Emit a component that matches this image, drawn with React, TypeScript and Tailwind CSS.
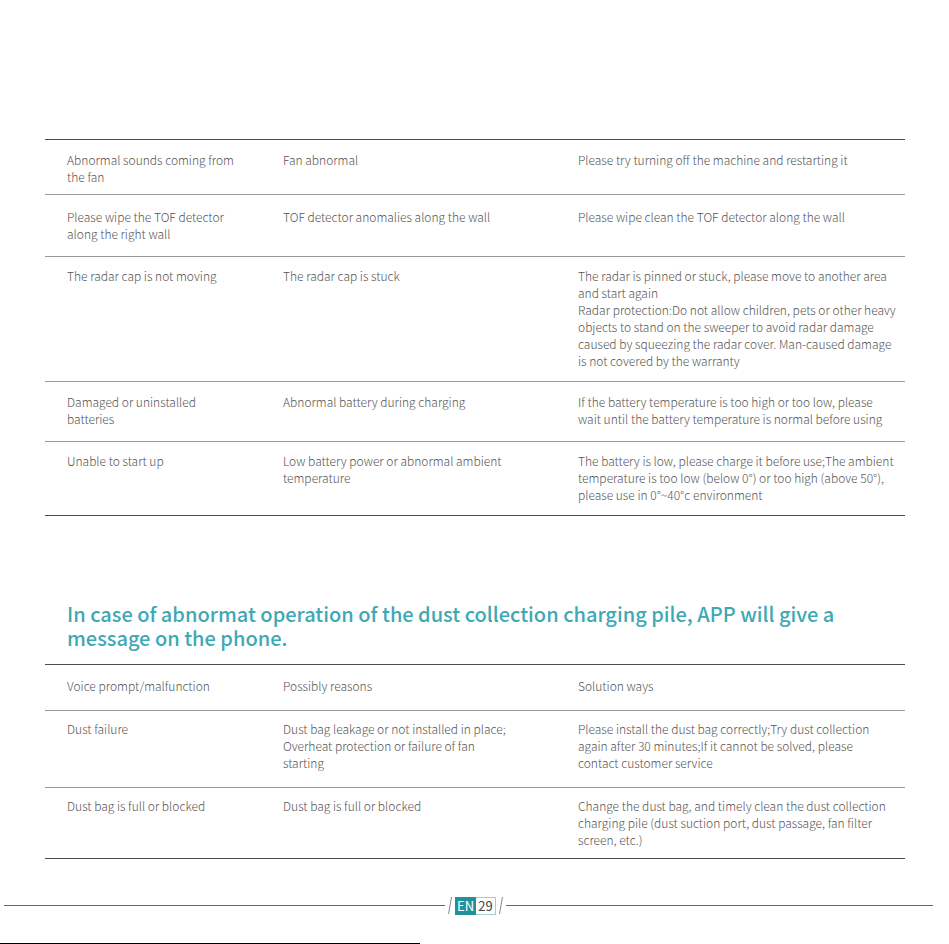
import React from "react";

const font = { fontFamily: '"Noto Sans CJK SC", "Noto Sans", sans-serif' };

type Row = { h: string; pt: string; c1: string[]; c2: string[]; c3: string[] };

const rows1: Row[] = [
  { h: "h-[55px]", pt: "pt-[11px]", c1: ["Abnormal sounds coming from", "the fan"], c2: ["Fan abnormal"], c3: ["Please try turning off the machine and restarting it"] },
  { h: "h-[62px]", pt: "pt-[13px]", c1: ["Please wipe the TOF detector", "along the right wall"], c2: ["TOF detector anomalies along the wall"], c3: ["Please wipe clean the TOF detector along the wall"] },
  {
    h: "h-[125px]", pt: "pt-[10px]", c1: ["The radar cap is not moving"], c2: ["The radar cap is stuck"],
    c3: [
      "The radar is pinned or stuck, please move to another area",
      "and start again",
      "Radar protection:Do not allow children, pets or other heavy",
      "objects to stand on the sweeper to avoid radar damage",
      "caused by squeezing the radar cover. Man-caused damage",
      "is not covered by the warranty",
    ],
  },
  { h: "h-[60px]", pt: "pt-[11px]", c1: ["Damaged or uninstalled", "batteries"], c2: ["Abnormal battery during charging"], c3: ["If the battery temperature is too high or too low, please", "wait until the battery temperature is normal before using"] },
  { h: "h-[74px]", pt: "pt-[10px]", c1: ["Unable to start up"], c2: ["Low battery power or abnormal ambient", "temperature"], c3: ["The battery is low, please charge it before use;The ambient", "temperature is too low (below 0°) or too high (above 50°),", "please use in 0°~40°c environment"] },
];

const rows2: Row[] = [
  { h: "h-[46px]", pt: "pt-[12px]", c1: ["Voice prompt/malfunction"], c2: ["Possibly reasons"], c3: ["Solution ways"] },
  { h: "h-[77px]", pt: "pt-[9px]", c1: ["Dust failure"], c2: ["Dust bag leakage or not installed in place;", "Overheat protection or failure of fan", "starting"], c3: ["Please install the dust bag correctly;Try dust collection", "again after 30 minutes;If it cannot be solved, please", "contact customer service"] },
  { h: "h-[71px]", pt: "pt-[9px]", c1: ["Dust bag is full or blocked"], c2: ["Dust bag is full or blocked"], c3: ["Change the dust bag, and timely clean the dust collection", "charging pile (dust suction port, dust passage, fan filter", "screen, etc.)"] },
];

function Lines({ lines }: { lines: string[] }) {
  return (
    <div>
      {lines.map((l, i) => (
        <div key={i} className="whitespace-nowrap">{l}</div>
      ))}
    </div>
  );
}

function Table({ rows }: { rows: Row[] }) {
  return (
    <div className="mx-[45px] w-[860px] border-t border-[#4d4d4d]">
      {rows.map((r, i) => (
        <div
          key={i}
          className={`grid grid-cols-[238px_295px_1fr] ${r.h} ${r.pt} border-b ${i === rows.length - 1 ? "border-[#4d4d4d]" : "border-[#9a9a9a]"} text-[12px] leading-[17px] font-light text-[#555555]`}
        >
          <div className="pl-[22px]"><Lines lines={r.c1} /></div>
          <div><Lines lines={r.c2} /></div>
          <div><Lines lines={r.c3} /></div>
        </div>
      ))}
    </div>
  );
}

export default function App() {
  return (
    <div className="w-[949px] h-[944px] bg-white flex flex-col overflow-hidden" style={font}>
      <div className="h-[139px] shrink-0" />
      <Table rows={rows1} />
      <div className="mt-[86px] ml-[67px] text-[20px] leading-[24px] font-medium text-[#3ea8b4]">
        <div className="whitespace-nowrap">In case of abnormat operation of the dust collection charging pile, APP will give a</div>
        <div className="whitespace-nowrap">message on the phone.</div>
      </div>
      <div className="mt-[14px]">
        <Table rows={rows2} />
      </div>
      <div className="mt-[37px] h-[19px] flex items-center">
        <div className="ml-[4px] w-[441px] h-px bg-[#666666]" />
        <svg width="10" height="19" viewBox="0 0 10 19" className="shrink-0">
          <line x1="6.5" y1="1" x2="3.5" y2="18" stroke="#8a8a8a" strokeWidth="1" />
        </svg>
        <div className="flex h-[18px] items-stretch">
          <div className="w-[21px] bg-[#23909d] text-white text-[13px] leading-[18px] flex items-center justify-center">EN</div>
          <div className="w-[20px] border border-l-0 border-[#9fd0d6] text-[#444444] text-[13px] leading-[16px] flex items-center justify-center">29</div>
        </div>
        <svg width="10" height="19" viewBox="0 0 10 19" className="shrink-0">
          <line x1="6.5" y1="1" x2="3.5" y2="18" stroke="#8a8a8a" strokeWidth="1" />
        </svg>
        <div className="w-[427px] h-px bg-[#666666]" />
      </div>
      <div className="mt-[28px] w-[420px] h-px bg-black shrink-0" />
    </div>
  );
}
